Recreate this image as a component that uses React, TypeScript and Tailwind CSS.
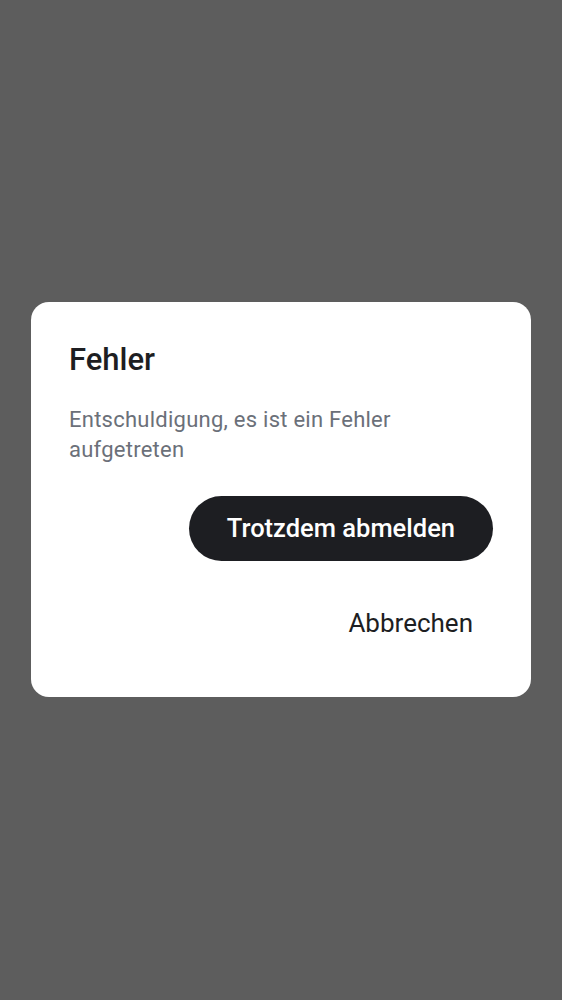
export default function App() {
  return (
    <div
      className="flex h-[1000px] w-full flex-col justify-start bg-[#5d5d5d] px-[31px] pt-[302px]"
      style={{ fontFamily: 'Roboto, "Noto Sans", sans-serif' }}
    >
      <div className="flex w-full flex-col rounded-[18px] bg-white px-[38px] pb-[44px] pt-[38px]">
        <h1 className="text-[31px] font-medium leading-[40px] text-[#1d1e22]">Fehler</h1>
        <p className="mt-[25px] text-[22px] leading-[30px] tracking-[0.25px] text-[#6b7079]">
          Entschuldigung, es ist ein Fehler aufgetreten
        </p>
        <div className="mt-[31px] flex flex-col items-end">
          <button className="h-[65px] rounded-full bg-[#1d1e22] px-[38px] text-[25.5px] font-medium text-white">
            Trotzdem abmelden
          </button>
          <button className="mt-[32px] h-[60px] px-[20px] text-[26px] font-normal text-[#1d1e22]">
            Abbrechen
          </button>
        </div>
      </div>
    </div>
  );
}
